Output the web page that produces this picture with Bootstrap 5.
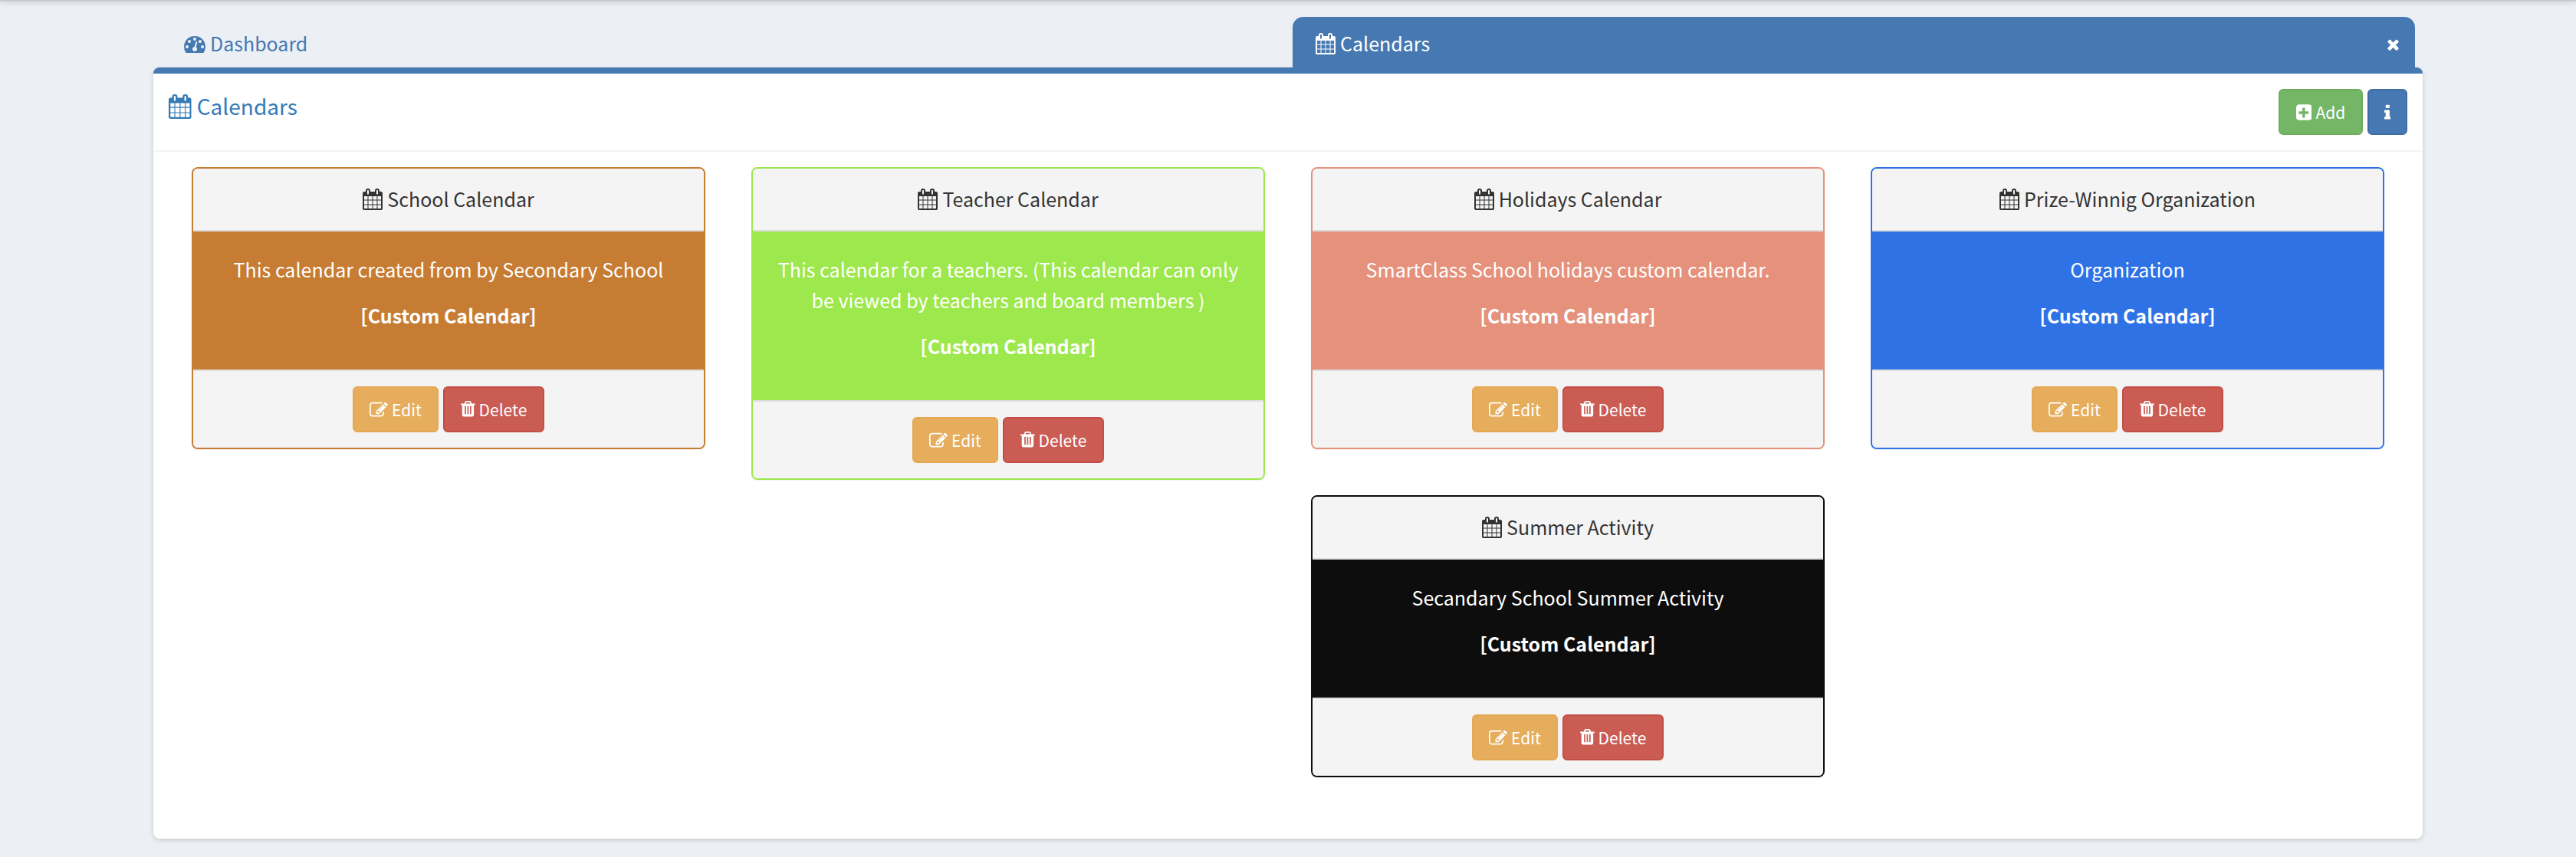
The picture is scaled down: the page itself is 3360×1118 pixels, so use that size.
<!DOCTYPE html>
<html lang="en">
<head>
<meta charset="utf-8">
<title>Calendars</title>
<link href="https://cdn.jsdelivr.net/npm/bootstrap@5.3.0/dist/css/bootstrap.min.css" rel="stylesheet">
<style>
html,body{height:100%}
body{background:#ecf0f5;font-family:"Noto Sans CJK SC","Source Sans Pro","Open Sans",sans-serif;font-size:25px;color:#333;line-height:1.5;overflow:hidden}
.top-edge{height:2px;background:#c9cbcd;box-shadow:0 1px 6px rgba(0,0,0,.28)}
.fa{display:inline-block;width:1em;height:1em;font-size:28px;fill:currentColor;vertical-align:-.143em;margin-right:6px}
.w-cal{width:.9286em}.w-plus{width:.857em}.w-info{width:.357em;margin-right:0}.w-trash{width:.786em}
.fa-lg-t{font-size:32px;margin-right:7px}
.page-wrap{padding:20px 200px 0}
.tab-strip{border:0;flex-wrap:nowrap;padding-left:22px;padding-right:10px;height:66px}
.tab-strip .nav-item{flex:1 1 0;min-width:0}
.tab-strip .nav-link{display:flex;align-items:flex-start;justify-content:space-between;height:74px;padding:15px 18px;border:0;border-radius:14px 14px 0 0;color:#4679b2;font-size:25px;line-height:38px;margin:0}
.tab-strip .nav-link.active{background:#4679b2;color:#fff;position:relative;z-index:2;padding-left:30px}
.tab-close{width:17px;height:22px;fill:#fff;margin-top:10px;margin-right:2px}
.main-panel{background:#fff;border:0;border-top:8px solid #4679b2;border-radius:8px;box-shadow:0 2px 6px rgba(0,0,0,.16);height:1006px}
.panel-head{height:102px;padding:0 20px;border-bottom:2px solid #f4f4f4}
.panel-title-text{color:#337ab7;font-size:28px;line-height:44px;margin:20px 0 0;font-weight:400}
.head-btns{padding-top:20px;gap:6px}
.btn-act{height:60px;font-size:21px;line-height:56px;padding:0;border-radius:6px;border-width:2px;color:#fff;text-align:center;white-space:nowrap}
.btn-act .fa{font-size:24px;margin-right:5px;vertical-align:-.18em}
.btn-act .w-info{margin-right:0}
.btn-add{background:#74b566;border-color:#6cae5e;width:110px}
.btn-info-sq{background:#4679b2;border-color:#3f6da1;width:52px}
.btn-edit{background:#e5ad5c;border-color:#e4a852;width:112px}
.btn-del{background:#ca5c54;border-color:#c24e46;width:132px}
.btn-act:hover{color:#fff}
.card-grid{margin:0;padding:20px 20px 0}
.card-grid>div{padding:0 30px;width:730px;flex:0 0 730px}
.cal-card{border:2px solid;border-radius:8px;margin-bottom:60px;overflow:hidden;box-shadow:0 1px 2px rgba(0,0,0,.06);background:#f4f4f4;font-size:25px}
.cal-card .card-header{background:#f4f4f4;border:0;border-bottom:2px solid #ddd;border-radius:0;height:82px;padding:0;text-align:center;color:#333;line-height:78px}
.cal-card .card-body{padding:29px 30px 0;text-align:center;color:#fff;line-height:40px;flex:none}
.cal-card .card-body p{margin:0 0 20px}
.cal-card .card-footer{background:#f4f4f4;border:0;border-top:2px solid #ddd;border-radius:0;height:102px;padding:20px 0 0;display:flex;justify-content:center;gap:6px}
.tone-orange{border-color:#c67c32}.tone-orange .card-body{background:#c67c32;height:180px}
.tone-lime{border-color:#9de84c}.tone-lime .card-body{background:#9de84c;height:220px}
.tone-salmon{border-color:#e5917c}.tone-salmon .card-body{background:#e5917c;height:180px}
.tone-blue{border-color:#2e72e6}.tone-blue .card-body{background:#2e72e6;height:180px}
.tone-black{border-color:#0d0d0d}.tone-black .card-body{background:#0d0d0d;height:180px}
</style>
</head>
<body>
<svg width="0" height="0" class="position-absolute">
<symbol id="i-cal" viewBox="0 0 1664 1792"><path d="M128 1664h288v-288h-288v288zm352 0h320v-288h-320v288zm-352-352h288v-320h-288v320zm352 0h320v-320h-320v320zm-352-384h288v-288h-288v288zm736 736h320v-288h-320v288zm-384-736h320v-288h-320v288zm768 736h288v-288h-288v288zm-384-352h320v-320h-320v320zm-352-864v-288q0-13-9.5-22.5t-22.5-9.5h-64q-13 0-22.5 9.5t-9.5 22.5v288q0 13 9.5 22.5t22.5 9.5h64q13 0 22.5-9.5t9.5-22.5zm736 864h288v-320h-288v320zm-384-384h320v-288h-320v288zm384 0h288v-288h-288v288zm32-480v-288q0-13-9.5-22.5t-22.5-9.5h-64q-13 0-22.5 9.5t-9.5 22.5v288q0 13 9.5 22.5t22.5 9.5h64q13 0 22.5-9.5t9.5-22.5zm384-64v1280q0 52-38 90t-90 38h-1408q-52 0-90-38t-38-90v-1280q0-52 38-90t90-38h128v-96q0-66 47-113t113-47h64q66 0 113 47t47 113v96h384v-96q0-66 47-113t113-47h64q66 0 113 47t47 113v96h128q52 0 90 38t38 90z"/></symbol>
<symbol id="i-dash" viewBox="0 0 1792 1792"><path d="M384 1152q0-53-37.500-90.500t-90.500-37.500-90.500 37.500-37.500 90.500 37.500 90.500 90.500 37.500 90.500-37.500 37.500-90.500zm192-448q0-53-37.500-90.500t-90.500-37.500-90.500 37.500-37.500 90.500 37.500 90.500 90.500 37.500 90.500-37.500 37.500-90.500zm428 481l101-382q6-26-7.500-48.500t-38.500-29.500-48 6.500-30 39.500l-101 382q-60 5-107 43.500t-63 98.500q-20 77 20 146t117 89 146-20 89-117q16-60-6-117t-72-91zm660-33q0-53-37.500-90.500t-90.500-37.500-90.500 37.500-37.500 90.500 37.500 90.500 90.500 37.500 90.500-37.500 37.500-90.500zm-640-640q0-53-37.500-90.500t-90.500-37.500-90.500 37.500-37.500 90.500 37.500 90.500 90.500 37.500 90.500-37.500 37.500-90.500zm448 192q0-53-37.500-90.500t-90.500-37.500-90.500 37.500-37.500 90.500 37.500 90.500 90.500 37.500 90.500-37.500 37.500-90.500zm320 448q0 261-141 483-19 29-54 29h-1402q-35 0-54-29-141-221-141-483 0-182 71-348t191-286 286-191 348-71 348 71 286 191 191 286 71 348z"/></symbol>
<symbol id="i-plus" viewBox="0 0 1536 1792"><path d="M1216 960v-128q0-26-19-45t-45-19h-288v-288q0-26-19-45t-45-19h-128q-26 0-45 19t-19 45v288h-288q-26 0-45 19t-19 45v128q0 26 19 45t45 19h288v288q0 26 19 45t45 19h128q26 0 45-19t19-45v-288h288q26 0 45-19t19-45zm320-576v960q0 119-84.500 203.500t-203.500 84.500h-960q-119 0-203.500-84.500t-84.500-203.500v-960q0-119 84.500-203.500t203.500-84.500h960q119 0 203.500 84.500t84.500 203.500z"/></symbol>
<symbol id="i-info" viewBox="0 0 640 1792"><path d="M640 1344v128q0 26-19 45t-45 19h-512q-26 0-45-19t-19-45v-128q0-26 19-45t45-19h64v-384h-64q-26 0-45-19t-19-45v-128q0-26 19-45t45-19h384q26 0 45 19t19 45v576h64q26 0 45 19t19 45zm-128-1152v192q0 26-19 45t-45 19h-256q-26 0-45-19t-19-45v-192q0-26 19-45t45-19h256q26 0 45 19t19 45z"/></symbol>
<symbol id="i-times" viewBox="0 0 1408 1792"><path d="M1298 1322q0 40-28 68l-136 136q-28 28-68 28t-68-28l-294-294-294 294q-28 28-68 28t-68-28l-136-136q-28-28-28-68t28-68l294-294-294-294q-28-28-28-68t28-68l136-136q28-28 68-28t68 28l294 294 294-294q28-28 68-28t68 28l136 136q28 28 28 68t-28 68l-294 294 294 294q28 28 28 68z"/></symbol>
<symbol id="i-edit" viewBox="0 0 1792 1792"><path d="M888 1184l116-116-152-152-116 116v56h96v96h56zm440-720q-16-16-33 1l-350 350q-17 17-1 33t33-1l350-350q17-17 1-33zm80 594v190q0 119-84.500 203.500t-203.500 84.500h-832q-119 0-203.500-84.500t-84.500-203.500v-832q0-119 84.500-203.500t203.500-84.500h832q63 0 117 25 15 7 18 23 3 17-9 29l-49 49q-14 14-32 8-23-6-45-6h-832q-66 0-113 47t-47 113v832q0 66 47 113t113 47h832q66 0 113-47t47-113v-126q0-13 9-22l64-64q15-15 35-7t20 29zm-96-738l288 288-672 672h-288v-288zm444 132l-92 92-288-288 92-92q28-28 68-28t68 28l152 152q28 28 28 68t-28 68z"/></symbol>
<symbol id="i-trash" viewBox="0 0 1408 1792"><path d="M512 1248v-704q0-14-9-23t-23-9h-64q-14 0-23 9t-9 23v704q0 14 9 23t23 9h64q14 0 23-9t9-23zm256 0v-704q0-14-9-23t-23-9h-64q-14 0-23 9t-9 23v704q0 14 9 23t23 9h64q14 0 23-9t9-23zm256 0v-704q0-14-9-23t-23-9h-64q-14 0-23 9t-9 23v704q0 14 9 23t23 9h64q14 0 23-9t9-23zm-544-992h448l-48-117q-7-9-17-11h-317q-10 2-17 11zm928 32v64q0 14-9 23t-23 9h-96v948q0 83-47 143.500t-113 60.500h-832q-66 0-113-58.500t-47-141.500v-952h-96q-14 0-23-9t-9-23v-64q0-14 9-23t23-9h309l70-167q15-37 54-63t79-26h320q40 0 79 26t54 63l70 167h309q14 0 23 9t9 23z"/></symbol>
</svg>

<div class="top-edge"></div>
<div class="page-wrap">
  <ul class="nav nav-tabs tab-strip">
    <li class="nav-item"><a class="nav-link" href="#"><span><svg class="fa"><use href="#i-dash"/></svg>Dashboard</span></a></li>
    <li class="nav-item"><a class="nav-link active" href="#"><span><svg class="fa w-cal"><use href="#i-cal"/></svg>Calendars</span><svg class="tab-close"><use href="#i-times"/></svg></a></li>
  </ul>
  <div class="card main-panel">
    <div class="panel-head d-flex justify-content-between">
      <h3 class="panel-title-text"><svg class="fa w-cal fa-lg-t"><use href="#i-cal"/></svg>Calendars</h3>
      <div class="head-btns d-flex">
        <a class="btn btn-act btn-add" href="#"><svg class="fa w-plus"><use href="#i-plus"/></svg>Add</a>
        <a class="btn btn-act btn-info-sq" href="#"><svg class="fa w-info"><use href="#i-info"/></svg></a>
      </div>
    </div>
    <div class="row card-grid">
      <div>
        <div class="card cal-card tone-orange">
          <div class="card-header"><svg class="fa w-cal"><use href="#i-cal"/></svg>School Calendar</div>
          <div class="card-body"><p>This calendar created from by Secondary School</p><p><strong>[Custom Calendar]</strong></p></div>
          <div class="card-footer"><a class="btn btn-act btn-edit" href="#"><svg class="fa"><use href="#i-edit"/></svg>Edit</a><a class="btn btn-act btn-del" href="#"><svg class="fa w-trash"><use href="#i-trash"/></svg>Delete</a></div>
        </div>
      </div>
      <div>
        <div class="card cal-card tone-lime">
          <div class="card-header"><svg class="fa w-cal"><use href="#i-cal"/></svg>Teacher Calendar</div>
          <div class="card-body"><p>This calendar for a teachers. (This calendar can only be viewed by teachers and board members )</p><p><strong>[Custom Calendar]</strong></p></div>
          <div class="card-footer"><a class="btn btn-act btn-edit" href="#"><svg class="fa"><use href="#i-edit"/></svg>Edit</a><a class="btn btn-act btn-del" href="#"><svg class="fa w-trash"><use href="#i-trash"/></svg>Delete</a></div>
        </div>
      </div>
      <div>
        <div class="card cal-card tone-salmon">
          <div class="card-header"><svg class="fa w-cal"><use href="#i-cal"/></svg>Holidays Calendar</div>
          <div class="card-body"><p>SmartClass School holidays custom calendar.</p><p><strong>[Custom Calendar]</strong></p></div>
          <div class="card-footer"><a class="btn btn-act btn-edit" href="#"><svg class="fa"><use href="#i-edit"/></svg>Edit</a><a class="btn btn-act btn-del" href="#"><svg class="fa w-trash"><use href="#i-trash"/></svg>Delete</a></div>
        </div>
        <div class="card cal-card tone-black">
          <div class="card-header"><svg class="fa w-cal"><use href="#i-cal"/></svg>Summer Activity</div>
          <div class="card-body"><p>Secandary School Summer Activity</p><p><strong>[Custom Calendar]</strong></p></div>
          <div class="card-footer"><a class="btn btn-act btn-edit" href="#"><svg class="fa"><use href="#i-edit"/></svg>Edit</a><a class="btn btn-act btn-del" href="#"><svg class="fa w-trash"><use href="#i-trash"/></svg>Delete</a></div>
        </div>
      </div>
      <div>
        <div class="card cal-card tone-blue">
          <div class="card-header"><svg class="fa w-cal"><use href="#i-cal"/></svg>Prize-Winnig Organization</div>
          <div class="card-body"><p>Organization</p><p><strong>[Custom Calendar]</strong></p></div>
          <div class="card-footer"><a class="btn btn-act btn-edit" href="#"><svg class="fa"><use href="#i-edit"/></svg>Edit</a><a class="btn btn-act btn-del" href="#"><svg class="fa w-trash"><use href="#i-trash"/></svg>Delete</a></div>
        </div>
      </div>
    </div>
  </div>
</div>
<script src="https://cdn.jsdelivr.net/npm/bootstrap@5.3.0/dist/js/bootstrap.bundle.min.js"></script>
</body>
</html>
